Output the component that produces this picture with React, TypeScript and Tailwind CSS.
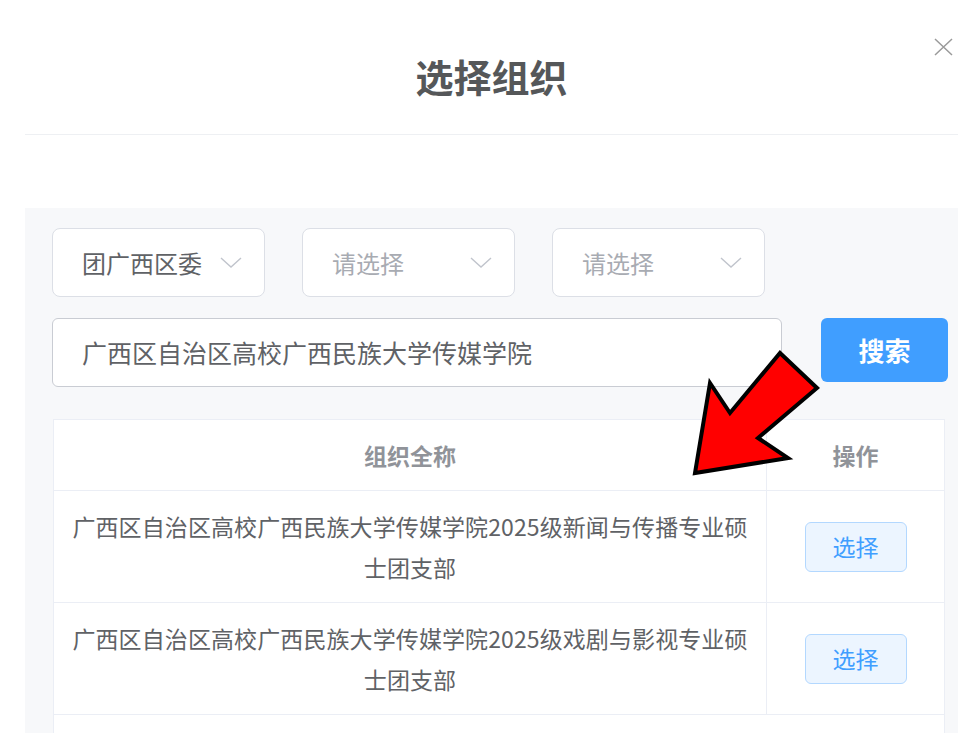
import React from 'react';

const rows = [
  '广西区自治区高校广西民族大学传媒学院2025级新闻与传播专业硕士团支部',
  '广西区自治区高校广西民族大学传媒学院2025级戏剧与影视专业硕士团支部',
];

function Chevron() {
  return (
    <svg width="22" height="12" viewBox="0 0 22 12" fill="none" className="shrink-0">
      <path d="M1 1 L11 10 L21 1" stroke="#c0c4cc" strokeWidth="1.4" />
    </svg>
  );
}

function SelectBox({ label, placeholder }: { label: string; placeholder?: boolean }) {
  return (
    <div className="w-[213px] h-[69px] bg-white border border-[#dcdfe6] rounded-[8px] flex items-center justify-between pl-[29px] pr-[22px]">
      <span className={`text-[24px] leading-none ${placeholder ? 'text-[#a8abb2]' : 'text-[#606266]'}`}>{label}</span>
      <Chevron />
    </div>
  );
}

export default function App() {
  return (
    <div
      className="relative w-[970px] h-[733px] bg-white overflow-hidden"
      style={{ fontFamily: '"Noto Sans CJK SC", "Noto Sans", sans-serif' }}
    >
      <div className="ml-[25px] w-[933px]">
        <div className="h-[135px] border-b border-[#eef0f3] flex items-center justify-center pt-[18px]">
          <h1 className="text-[38px] font-bold text-[#555759] leading-none">选择组织</h1>
        </div>

        <div className="h-[73px]" />

        <div className="bg-[#f7f8fa] h-[525px] pl-[27px] pt-[20px]">
          <div className="flex gap-[37px]">
            <SelectBox label="团广西区委" />
            <SelectBox label="请选择" placeholder />
            <SelectBox label="请选择" placeholder />
          </div>

          <div className="flex items-start mt-[21px]">
            <div className="w-[730px] h-[69px] bg-white border border-[#c9ccd3] rounded-[6px] flex items-center pl-[29px]">
              <span className="text-[25px] text-[#606266] leading-none">广西区自治区高校广西民族大学传媒学院</span>
            </div>
            <button className="ml-[39px] w-[127px] h-[64px] bg-[#409eff] rounded-[6px] text-white text-[26px] font-bold leading-none">
              搜索
            </button>
          </div>

          <div className="mt-[32px] w-[892px] ml-px bg-white border border-[#ebeef5]">
            <div className="flex h-[71px] border-b border-[#ebeef5]">
              <div className="w-[713px] flex items-center justify-center border-r border-[#ebeef5] text-[23px] font-bold text-[#909399]">
                组织全称
              </div>
              <div className="flex-1 flex items-center justify-center text-[23px] font-bold text-[#909399]">操作</div>
            </div>
            {rows.map((r, i) => (
              <div key={i} className="flex h-[112px] border-b border-[#ebeef5]">
                <div className="w-[713px] flex items-center justify-center border-r border-[#ebeef5] px-[12px] text-center text-[23px] tracking-[0.1px] leading-[41px] text-[#606266]">
                  {r}
                </div>
                <div className="flex-1 flex items-center justify-center">
                  <button className="w-[102px] h-[50px] bg-[#ecf5ff] border border-[#b3d8ff] rounded-[6px] text-[23px] text-[#409eff] leading-none">
                    选择
                  </button>
                </div>
              </div>
            ))}
            <div className="h-[40px]" />
          </div>
        </div>
      </div>

      <button className="absolute left-[933px] top-[37px] w-[20px] h-[20px] flex items-center justify-center">
        <svg width="19" height="18" viewBox="0 0 19 18" fill="none">
          <path d="M1 1 L18 17 M18 1 L1 17" stroke="#9a9a9a" strokeWidth="1.5" />
        </svg>
      </button>

      <svg className="absolute left-0 top-0 pointer-events-none" width="970" height="733" viewBox="0 0 970 733">
        <polygon
          points="695,473 710,383 730,413 780,353 817,388 758,438 788,458"
          fill="#ff0000"
          stroke="#000"
          strokeWidth="4"
          strokeLinejoin="miter"
        />
      </svg>
    </div>
  );
}
